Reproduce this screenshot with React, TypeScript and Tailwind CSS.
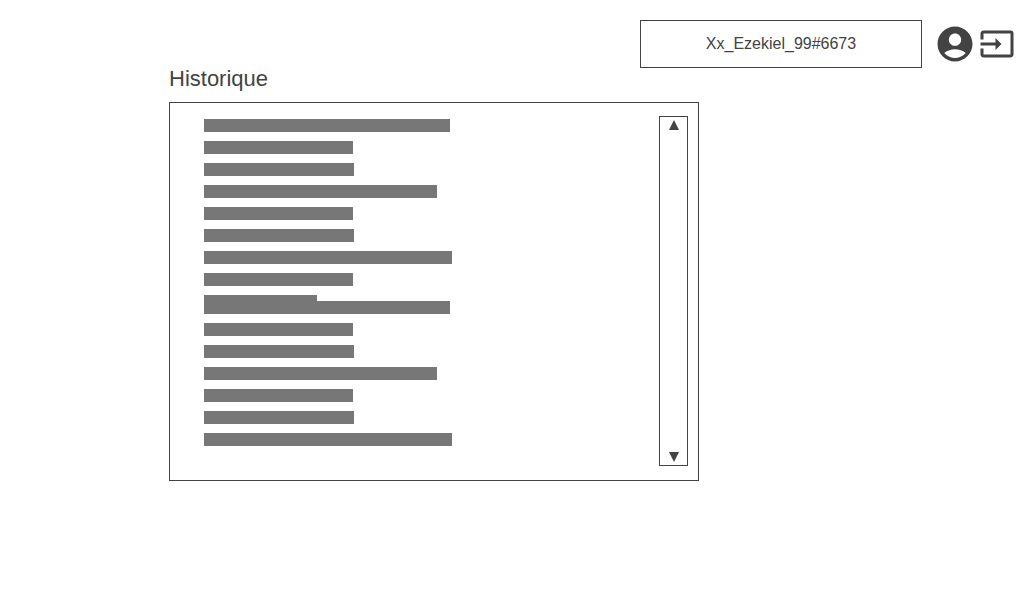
import { MdAccountCircle, MdInput } from 'react-icons/md'

type Line = { width: string; height: string }

const firstBlock: Line[] = [
  { width: 'w-[246px]', height: 'h-[13px]' },
  { width: 'w-[149px]', height: 'h-[13px]' },
  { width: 'w-[150px]', height: 'h-[13px]' },
  { width: 'w-[233px]', height: 'h-[13px]' },
  { width: 'w-[149px]', height: 'h-[13px]' },
  { width: 'w-[150px]', height: 'h-[13px]' },
  { width: 'w-[248px]', height: 'h-[13px]' },
  { width: 'w-[149px]', height: 'h-[13px]' },
  { width: 'w-[113px]', height: 'h-[6px]' },
]

const secondBlock: Line[] = firstBlock.slice(0, 7)

function TextBlock({ lines }: { lines: Line[] }) {
  return (
    <ul className="flex flex-col gap-[9px]">
      {lines.map((line, index) => (
        <li key={index} className={`${line.width} ${line.height} max-w-full bg-[#777777]`} />
      ))}
    </ul>
  )
}

function Header() {
  return (
    <header className="flex items-center justify-end pt-5 pr-[9px]">
      <p className="w-[282px] border border-[#434343] py-[11px] text-center text-base leading-6">
        Xx_Ezekiel_99#6673
      </p>
      <button type="button" aria-label="Compte" className="ml-3">
        <MdAccountCircle className="size-[42px]" />
      </button>
      <button type="button" aria-label="Déconnexion" className="ml-[3px]">
        <MdInput className="size-9" />
      </button>
    </header>
  )
}

function ScrollTrack() {
  return (
    <div className="flex w-[29px] shrink-0 flex-col items-center justify-between border border-[#434343] py-[3px]">
      <button type="button" aria-label="Défiler vers le haut">
        <svg viewBox="0 0 10 10" className="size-[10px] fill-current">
          <path d="M5 0 10 10H0z" />
        </svg>
      </button>
      <button type="button" aria-label="Défiler vers le bas">
        <svg viewBox="0 0 10 10" className="size-[10px] fill-current">
          <path d="M5 10 0 0h10z" />
        </svg>
      </button>
    </div>
  )
}

export default function App() {
  return (
    <div className="min-h-screen bg-white font-['Liberation_Sans',Arial,sans-serif] text-[#434343]">
      <Header />
      <main className="pr-4 pl-[169px]">
        <h1 className="mb-3 text-[22px] leading-[22px]">Historique</h1>
        <section
          aria-label="Historique"
          className="flex max-w-[530px] justify-between border border-[#434343] pt-[13px] pr-[10px] pb-[14px] pl-[34px]"
        >
          <div className="min-w-0 grow pt-[3px] pb-5">
            <TextBlock lines={firstBlock} />
            <TextBlock lines={secondBlock} />
          </div>
          <ScrollTrack />
        </section>
      </main>
    </div>
  )
}
